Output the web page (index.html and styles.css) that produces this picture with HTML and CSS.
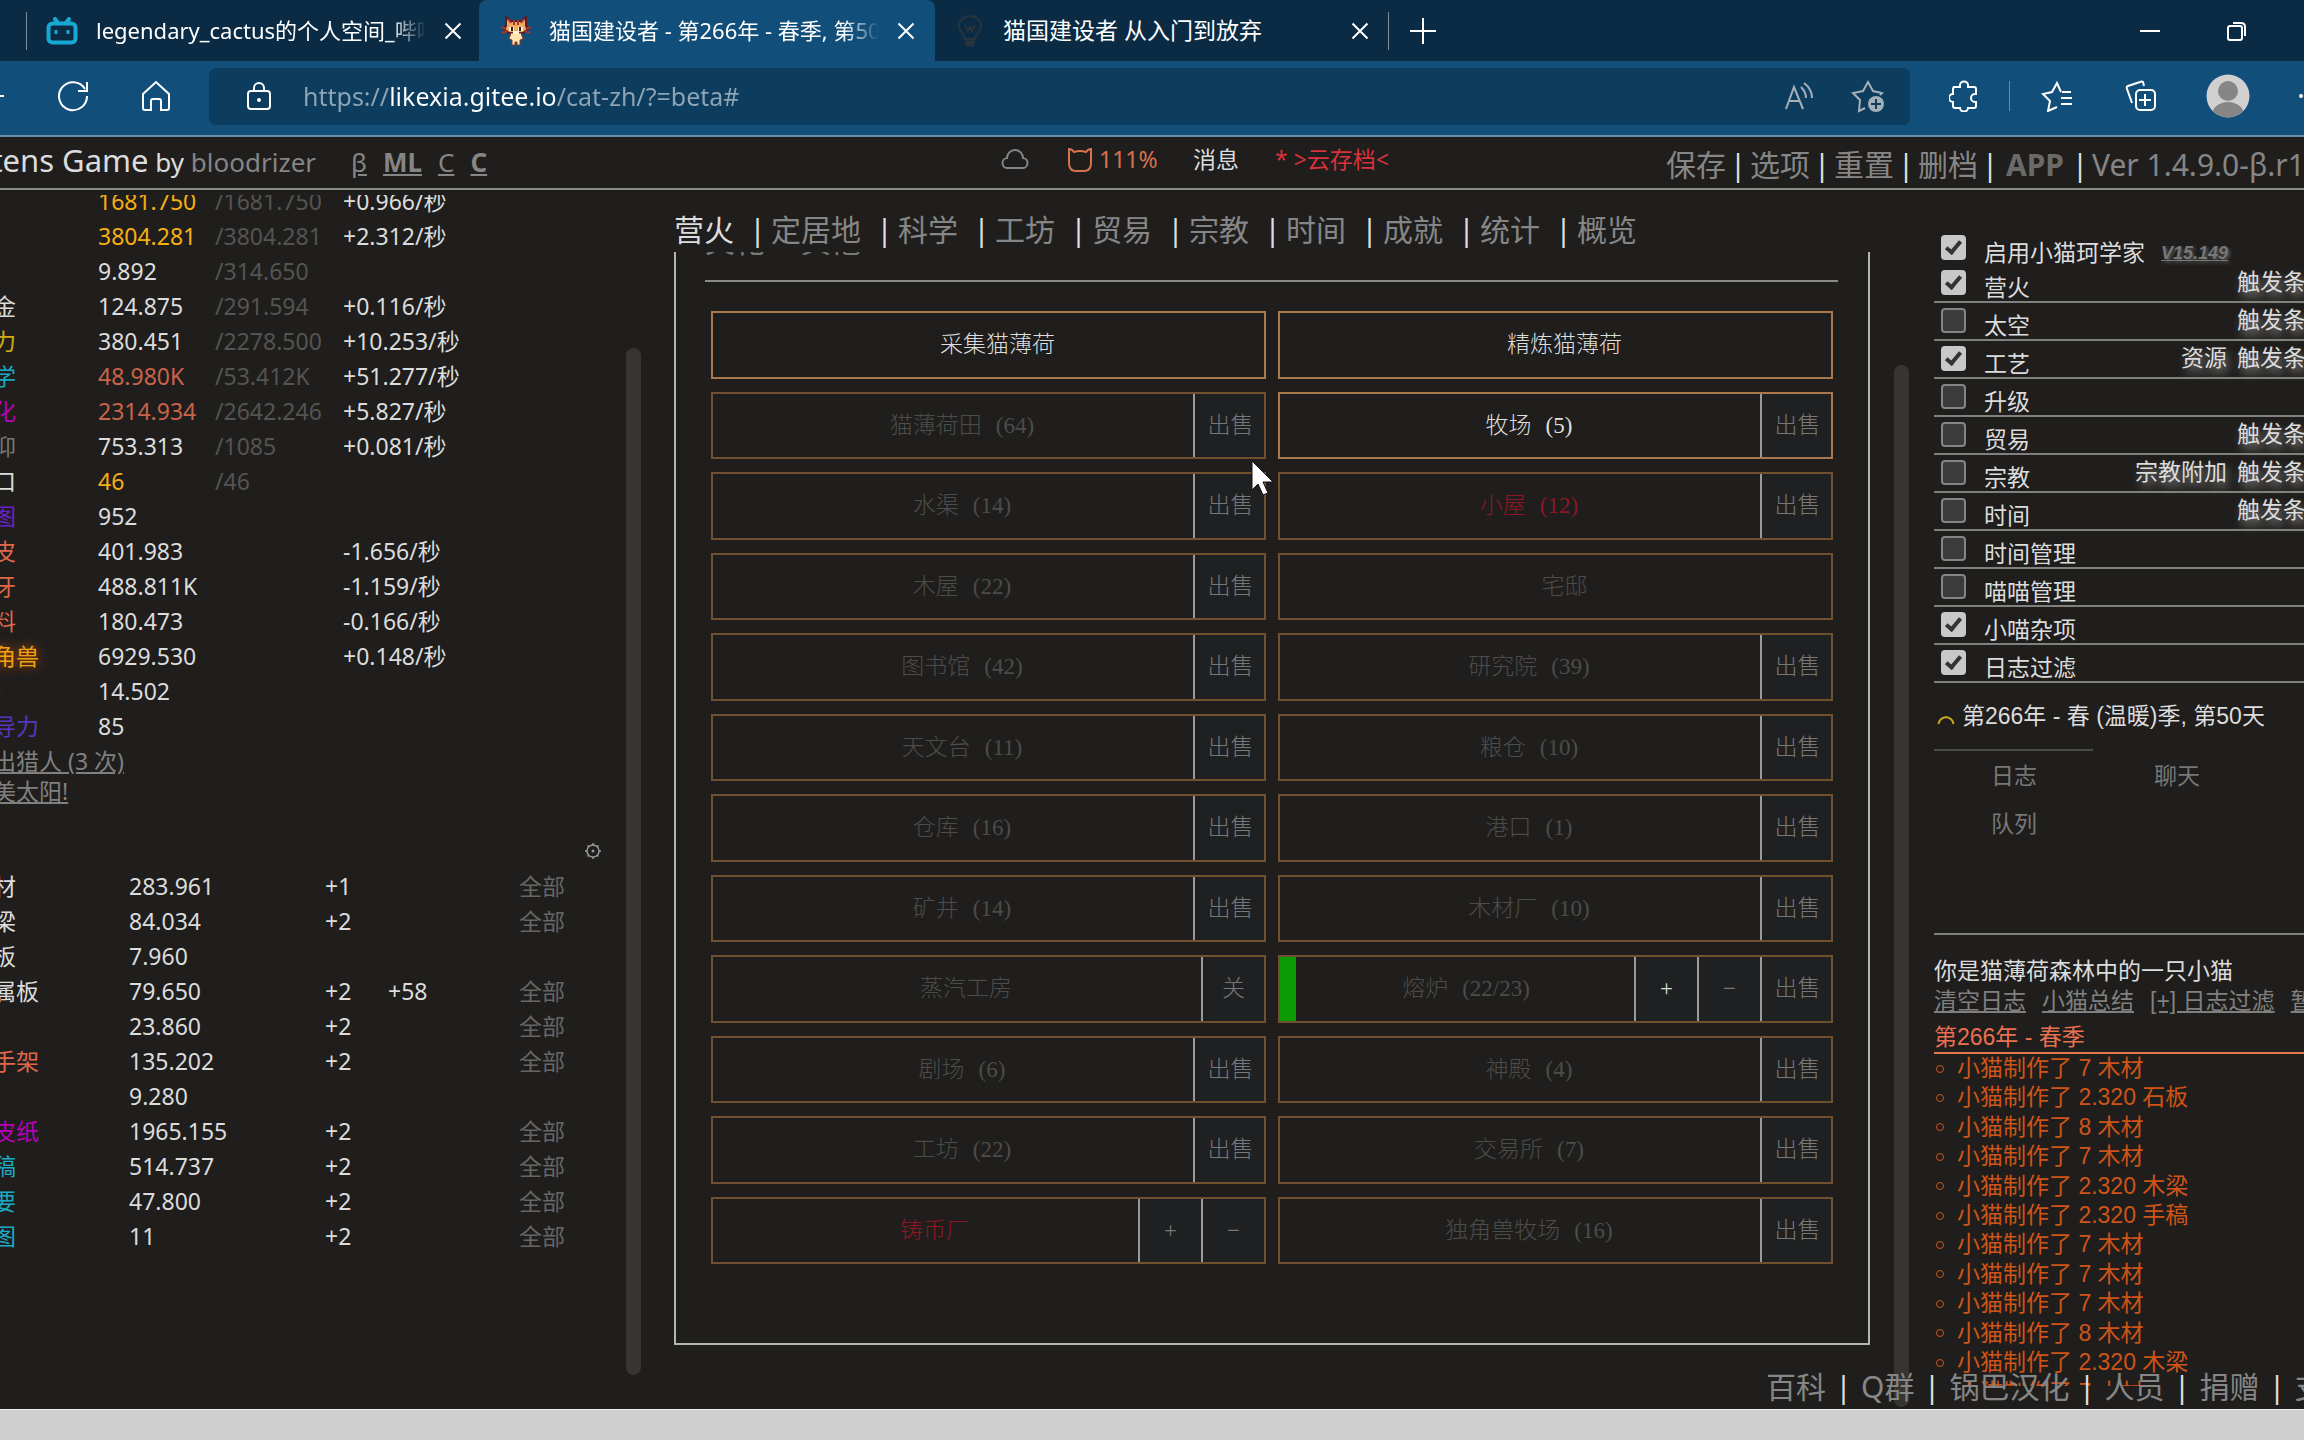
FILE: index.html
```html
<!DOCTYPE html>
<html lang="zh-CN">
<head>
<meta charset="utf-8">
<meta name="viewport" content="width=device-width, initial-scale=1">
<title>猫国建设者</title>
<link rel="stylesheet" href="styles.css">
</head>
<body>
<div class="tabstrip">
  <div class="tab tab-first">
    <svg class="ico" viewBox="0 0 32 28" width="32" height="28"><g fill="none" stroke="#17a9d3" stroke-width="4" stroke-linecap="round"><path d="M9 2l3 4M23 2l-3 4"/><rect x="2.500" y="6.500" width="27" height="19" rx="4"/></g><path d="M10 13v4M22 13v4" stroke="#17a9d3" stroke-width="3"/></svg>
    <span class="tab-title">legendary_cactus的个人空间_哔哩哔哩</span>
    <button class="close" aria-label="关闭"><svg viewBox="0 0 18 18" width="18" height="18"><path d="M1.500 1.500l15 15M16.500 1.500l-15 15"/></svg></button>
  </div>
  <div class="tab tab-active">
    <svg class="ico" viewBox="0 0 30 30" width="30" height="30"><path d="M5 1l5 4h10l5-4v9l2 3-5 4H8l-5-4 2-3z" fill="#ecaa62" stroke="#5c1b26" stroke-width="2"/><path d="M10 17h10l2 6-3 1v5h-3v-3h-2v3h-3v-5l-3-1z" fill="#ffe6b0" stroke="#8a3d2b" stroke-width="1"/><path d="M7 3l3 4M23 3l-3 4M13 4v5M17 4v5M0 11l5 2M30 11l-5 2M1 17l5-2M29 17l-5-2" stroke="#a8382f" stroke-width="2"/><path d="M8 11h5v4H8zM17 11h5v4h-5zM12 15h6v3h-6z" fill="#fff3d6"/><path d="M11 11v4M19 11v4" stroke="#3a1c12" stroke-width="2"/></svg>
    <span class="tab-title">猫国建设者 - 第266年 - 春季, 第50天</span>
    <button class="close" aria-label="关闭"><svg viewBox="0 0 18 18" width="18" height="18"><path d="M1.500 1.500l15 15M16.500 1.500l-15 15"/></svg></button>
  </div>
  <div class="tab tab-last">
    <svg class="ico" viewBox="0 0 26 32" width="26" height="32"><g fill="none" stroke="#28343c" stroke-width="2"><path d="M8 24c0-5-6-6-6-13a11 10 0 0 1 22 0c0 7-6 8-6 13zM8 10l3 6 2-4 2 4 3-6"/><path d="M8 27h10M9 30h8" stroke-width="3"/></g></svg>
    <span class="tab-title">猫国建设者 从入门到放弃</span>
    <button class="close" aria-label="关闭"><svg viewBox="0 0 18 18" width="18" height="18"><path d="M1.500 1.500l15 15M16.500 1.500l-15 15"/></svg></button>
  </div>
  <button class="newtab" aria-label="新建标签页"><svg viewBox="0 0 28 28" width="28" height="28"><path d="M14 1v26M1 14h26"/></svg></button>
  <div class="winctl">
    <button aria-label="最小化"><svg viewBox="0 0 20 20" width="20" height="20"><path d="M0 10h20"/></svg></button>
    <button aria-label="还原"><svg viewBox="0 0 20 20" width="20" height="20"><rect x="1" y="5" width="14" height="14" rx="2"/><path d="M6 2h8q4 0 4 4v9"/></svg></button>
  </div>
</div>
<div class="toolbar">
  <button class="back" aria-label="后退"><svg viewBox="0 0 30 30" width="30" height="30"><path d="M2 15h28M13 4L2 15l11 11"/></svg></button>
  <button class="reload" aria-label="刷新"><svg viewBox="0 0 32 32" width="32" height="32"><path d="M28 9A14 14 0 1 0 30 16M30 2v9h-9"/></svg></button>
  <button class="home" aria-label="主页"><svg viewBox="0 0 30 32" width="30" height="32"><path d="M2 14L15 2l13 12v14q0 2-2 2h-6v-9q0-2-2-2h-6q-2 0-2 2v9H4q-2 0-2-2z"/></svg></button>
  <div class="address">
    <svg viewBox="0 0 26 30" width="26" height="30"><rect x="2" y="10" width="22" height="18" rx="3"/><path d="M8 10V7a5 5 0 0 1 10 0v3"/><circle cx="13" cy="19" r="1"/></svg>
    <input type="text" aria-label="地址" value="https://likexia.gitee.io/cat-zh/?=beta#">
    <button class="dim" aria-label="朗读"><svg viewBox="0 0 30 30" width="30" height="30"><path d="M2 28L10 6l9 22M5 20h11M17 6q5 5 5 11M20 2q8 6 8 15"/></svg></button>
    <button class="dim fav" aria-label="收藏"><svg viewBox="0 0 34 34" width="34" height="34"><path d="M14 29l-6 3 1-11-7-7 10-2 5-9 5 9 9 2-2 2"/><circle cx="25" cy="25" r="8" fill="#a5b0b8" stroke="none"/><path d="M25 20v10M20 25h10" stroke="#0c3d5e"/></svg></button>
  </div>
  <button class="ext" aria-label="扩展"><svg viewBox="0 0 30 32" width="30" height="32"><path d="M4 7h7V5a4 3.500 0 0 1 8 0v2h6q2 0 2 2v5h-1a4 4 0 0 0 0 8h1v4q0 2-2 2h-6a4 3.500 0 0 1-8 0H6q-2 0-2-2v-4a4 4 0 0 1 0-8V9q0-2 2-2"/></svg></button>
  <span class="vline"></span>
  <button class="favs" aria-label="收藏夹"><svg viewBox="0 0 32 32" width="32" height="32"><path d="M20 12l-4-9-5 9-9 2 7 7-2 10 9-4M21 12h9M20 18h11M20 24h11"/></svg></button>
  <button class="coll" aria-label="集锦"><svg viewBox="0 0 32 32" width="32" height="32"><path d="M20 6l-1-4q-1-1-3 0L4 6q-2 1-1 3l5 14"/><rect x="12" y="10" width="19" height="20" rx="4"/><path d="M21 14v12M15 20h12"/></svg></button>
  <svg class="avatar" viewBox="0 0 44 44" width="44" height="44"><clipPath id="av"><circle cx="22" cy="22" r="21.500"/></clipPath><g clip-path="url(#av)" stroke="none"><rect width="44" height="44" fill="#d0d0d0"/><circle cx="22" cy="17" r="10" fill="#868686"/><ellipse cx="22" cy="41" rx="16" ry="13" fill="#868686"/></g></svg>
  <button class="more" aria-label="更多"><svg viewBox="0 0 6 6" width="6" height="6"><circle cx="3" cy="3" r="2"/></svg></button>
</div>
<main class="game">
  <header class="head">
    <div class="brand"><span class="brand-name">Kittens Game</span> by <a href="#">bloodrizer</a></div>
    <nav class="langs"><a href="#">β</a><a href="#"><b>ML</b></a><a href="#">C</a><a href="#"><b>C</b></a></nav>
    <div class="status">
      <svg class="cloud" viewBox="0 0 28 22" width="28" height="22"><path d="M7 19a5 5 0 0 1-1-10 8 8 0 0 1 16 0 5 5 0 0 1-1 10z" fill="none" stroke="#868686" stroke-width="2"/></svg>
      <span class="happy"><svg viewBox="0 0 26 26" width="26" height="26"><path d="M2 2q3 0 5 3 6-2 12 0 2-3 5-3v14q0 8-7 8H9q-7 0-7-8z" fill="none" stroke="#d9714f" stroke-width="2"/></svg>111%</span>
      <span class="msg">消息</span>
      <a class="cloudsave" href="#">* &gt;云存档&lt;</a>
    </div>
    <nav class="menu"><a href="#">保存</a><i>|</i><a href="#">选项</a><i>|</i><a href="#">重置</a><i>|</i><a href="#">删档</a><i>|</i><a href="#" class="app"><b>APP</b></a><i>|</i><span>Ver 1.4.9.0-β.r13</span></nav>
  </header>
  <div class="columns">
    <aside class="left">
      <div class="left-body">
      <table class="res">
        <colgroup><col class="c-name"><col class="c-max"><col class="c-rate"><col></colgroup>
        <tr><td>煤</td><td class="full">1681.750</td><td class="max">/1681.750</td><td>+0.966/秒</td></tr>
        <tr><td>铁</td><td class="full">3804.281</td><td class="max">/3804.281</td><td>+2.312/秒</td></tr>
        <tr><td>钛</td><td>9.892</td><td class="max">/314.650</td><td></td></tr>
        <tr><td>黄金</td><td>124.875</td><td class="max">/291.594</td><td>+0.116/秒</td></tr>
        <tr><td class="n-power">电力</td><td>380.451</td><td class="max">/2278.500</td><td>+10.253/秒</td></tr>
        <tr><td class="n-sci">科学</td><td class="near">48.980K</td><td class="max">/53.412K</td><td>+51.277/秒</td></tr>
        <tr><td class="n-cult">文化</td><td class="near">2314.934</td><td class="max">/2642.246</td><td>+5.827/秒</td></tr>
        <tr><td class="n-faith">信仰</td><td>753.313</td><td class="max">/1085</td><td>+0.081/秒</td></tr>
        <tr><td>人口</td><td class="full">46</td><td class="max">/46</td><td></td></tr>
        <tr><td class="n-blue">蓝图</td><td>952</td><td></td><td></td></tr>
        <tr><td class="n-lux">毛皮</td><td>401.983</td><td></td><td>-1.656/秒</td></tr>
        <tr><td class="n-lux">象牙</td><td>488.811K</td><td></td><td>-1.159/秒</td></tr>
        <tr><td class="n-lux">香料</td><td>180.473</td><td></td><td>-0.166/秒</td></tr>
        <tr><td class="n-uni">独角兽</td><td>6929.530</td><td></td><td>+0.148/秒</td></tr>
        <tr><td class="n-uni">泪</td><td>14.502</td><td></td><td></td></tr>
        <tr><td class="n-lead">领导力</td><td>85</td><td></td><td></td></tr>
      </table>
      <div class="acts"><a href="#">派出猎人 (3 次)</a><a href="#">赞美太阳!</a></div>
      <div class="gear"><button aria-label="设置"><svg viewBox="0 0 18 18" width="18" height="18"><g fill="none" stroke="#999" stroke-width="1.500"><circle cx="9" cy="9" r="6"/><path d="M9 1v2M9 15v2M1 9h2M15 9h2M3.500 3.500l1 1M13.500 13.500l1 1M14.500 3.500l-1 1M4.500 13.500l-1 1"/></g><circle cx="9" cy="9" r="1.500" fill="#999"/></svg></button></div>
      <table class="craft">
        <colgroup><col class="k-name"><col class="k-val"><col class="k-one"><col class="k-two"><col></colgroup>
        <tr><td>木材</td><td>283.961</td><td>+1</td><td></td><td><a href="#">全部</a></td></tr>
        <tr><td>木梁</td><td>84.034</td><td>+2</td><td></td><td><a href="#">全部</a></td></tr>
        <tr><td>石板</td><td>7.960</td><td></td><td></td><td></td></tr>
        <tr><td>金属板</td><td>79.650</td><td>+2</td><td>+58</td><td><a href="#">全部</a></td></tr>
        <tr><td>钢</td><td>23.860</td><td>+2</td><td></td><td><a href="#">全部</a></td></tr>
        <tr><td class="n-lux">脚手架</td><td>135.202</td><td>+2</td><td></td><td><a href="#">全部</a></td></tr>
        <tr><td>船</td><td>9.280</td><td></td><td></td><td></td></tr>
        <tr><td class="n-cult">羊皮纸</td><td>1965.155</td><td>+2</td><td></td><td><a href="#">全部</a></td></tr>
        <tr><td class="n-sci">手稿</td><td>514.737</td><td>+2</td><td></td><td><a href="#">全部</a></td></tr>
        <tr><td class="n-sci">概要</td><td>47.800</td><td>+2</td><td></td><td><a href="#">全部</a></td></tr>
        <tr><td class="n-sci">蓝图</td><td>11</td><td>+2</td><td></td><td><a href="#">全部</a></td></tr>
      </table>
      </div>
      <div class="thumb"></div>
    </aside>
    <section class="mid">
      <nav class="gtabs"><a href="#" class="on">营火</a><i>|</i><a href="#">定居地</a><i>|</i><a href="#">科学</a><i>|</i><a href="#">工坊</a><i>|</i><a href="#">贸易</a><i>|</i><a href="#">宗教</a><i>|</i><a href="#">时间</a><i>|</i><a href="#">成就</a><i>|</i><a href="#">统计</a><i>|</i><a href="#">概览</a></nav>
      <div class="panel">
        <div class="filters"><a href="#">文化</a><a href="#">其他</a></div>
        <div class="blds">
          <div class="bld ok"><button class="nm">采集猫薄荷</button></div>
          <div class="bld ok"><button class="nm">精炼猫薄荷</button></div>
          <div class="bld"><button class="nm">猫薄荷田 <span>(64)</span></button><button class="sd">出售</button></div>
          <div class="bld ok"><button class="nm">牧场 <span>(5)</span></button><button class="sd">出售</button></div>
          <div class="bld"><button class="nm">水渠 <span>(14)</span></button><button class="sd">出售</button></div>
          <div class="bld lim"><button class="nm">小屋 <span>(12)</span></button><button class="sd">出售</button></div>
          <div class="bld"><button class="nm">木屋 <span>(22)</span></button><button class="sd">出售</button></div>
          <div class="bld"><button class="nm">宅邸</button></div>
          <div class="bld"><button class="nm">图书馆 <span>(42)</span></button><button class="sd">出售</button></div>
          <div class="bld"><button class="nm">研究院 <span>(39)</span></button><button class="sd">出售</button></div>
          <div class="bld"><button class="nm">天文台 <span>(11)</span></button><button class="sd">出售</button></div>
          <div class="bld"><button class="nm">粮仓 <span>(10)</span></button><button class="sd">出售</button></div>
          <div class="bld"><button class="nm">仓库 <span>(16)</span></button><button class="sd">出售</button></div>
          <div class="bld"><button class="nm">港口 <span>(1)</span></button><button class="sd">出售</button></div>
          <div class="bld"><button class="nm">矿井 <span>(14)</span></button><button class="sd">出售</button></div>
          <div class="bld"><button class="nm">木材厂 <span>(10)</span></button><button class="sd">出售</button></div>
          <div class="bld"><button class="nm">蒸汽工房</button><button class="sd nr">关</button></div>
          <div class="bld prog"><button class="nm">熔炉 <span>(22/23)</span></button><button class="sd nr lit">+</button><button class="sd nr">−</button><button class="sd">出售</button></div>
          <div class="bld"><button class="nm">剧场 <span>(6)</span></button><button class="sd">出售</button></div>
          <div class="bld"><button class="nm">神殿 <span>(4)</span></button><button class="sd">出售</button></div>
          <div class="bld"><button class="nm">工坊 <span>(22)</span></button><button class="sd">出售</button></div>
          <div class="bld"><button class="nm">交易所 <span>(7)</span></button><button class="sd">出售</button></div>
          <div class="bld lim"><button class="nm">铸币厂</button><button class="sd nr">+</button><button class="sd nr">−</button></div>
          <div class="bld"><button class="nm">独角兽牧场 <span>(16)</span></button><button class="sd">出售</button></div>
        </div>
      </div>
    </section>
    <div class="thumb thumb-mid"></div>
    <aside class="right">
      <div class="opts">
        <div class="opt top"><input type="checkbox" id="o1" checked><label for="o1">启用小猫珂学家</label><a class="ver" href="#">V15.149</a></div>
        <div class="opt"><input type="checkbox" id="o2" checked><label for="o2">营火</label><span class="ex"><a href="#">触发条件</a></span></div>
        <div class="opt"><input type="checkbox" id="o3"><label for="o3">太空</label><span class="ex"><a href="#">触发条件</a></span></div>
        <div class="opt"><input type="checkbox" id="o4" checked><label for="o4">工艺</label><span class="ex"><a href="#">资源</a><a href="#">触发条件</a></span></div>
        <div class="opt"><input type="checkbox" id="o5"><label for="o5">升级</label></div>
        <div class="opt"><input type="checkbox" id="o6"><label for="o6">贸易</label><span class="ex"><a href="#">触发条件</a></span></div>
        <div class="opt"><input type="checkbox" id="o7"><label for="o7">宗教</label><span class="ex"><a href="#">宗教附加</a><a href="#">触发条件</a></span></div>
        <div class="opt"><input type="checkbox" id="o8"><label for="o8">时间</label><span class="ex"><a href="#">触发条件</a></span></div>
        <div class="opt"><input type="checkbox" id="o9"><label for="o9">时间管理</label></div>
        <div class="opt"><input type="checkbox" id="o10"><label for="o10">喵喵管理</label></div>
        <div class="opt"><input type="checkbox" id="o11" checked><label for="o11">小喵杂项</label></div>
        <div class="opt"><input type="checkbox" id="o12" checked><label for="o12">日志过滤</label></div>
      </div>
      <div class="date"><svg viewBox="0 0 18 10" width="18" height="10"><path d="M1.500 9q1-6 7.500-7 6.500 1 7.500 7" fill="none" stroke="#c9a51c" stroke-width="2"/></svg>第266年 - 春 (温暖)季, 第50天</div>
      <nav class="rtabs"><a href="#">日志</a><a href="#">聊天</a><a href="#">队列</a></nav>
      <div class="intro">你是猫薄荷森林中的一只小猫</div>
      <div class="loglinks"><a href="#">清空日志</a><a href="#">小猫总结</a><a href="#">[+] 日志过滤</a><a href="#">暂停</a></div>
      <h2 class="season">第266年 - 春季</h2>
      <div class="logclip"><ul class="log">
        <li>小猫制作了 7 木材</li>
        <li>小猫制作了 2.320 石板</li>
        <li>小猫制作了 8 木材</li>
        <li>小猫制作了 7 木材</li>
        <li>小猫制作了 2.320 木梁</li>
        <li>小猫制作了 2.320 手稿</li>
        <li>小猫制作了 7 木材</li>
        <li>小猫制作了 7 木材</li>
        <li>小猫制作了 7 木材</li>
        <li>小猫制作了 8 木材</li>
        <li>小猫制作了 2.320 木梁</li>
        <li>小猫制作了 7 木材</li>
      </ul></div>
    </aside>
  </div>
  <footer class="foot"><a href="#">百科</a><i>|</i><a href="#">Q群</a><i>|</i><a href="#">锅巴汉化</a><i>|</i><a href="#">人员</a><i>|</i><a href="#">捐赠</a><i>|</i><a href="#">支持</a></footer>
  <svg class="cursor" viewBox="0 0 24 36" width="24" height="36"><path d="M1 1v29l6-6 5 11 5-2-5-11h10z" fill="#fff" stroke="#111"/></svg>
</main>
<div class="shelf"></div>
</body>
</html>
```
FILE: styles.css
```css
* { box-sizing: border-box; }
body {
  margin: 0;
  height: 100vh;
  display: flex;
  flex-direction: column;
  overflow: hidden;
  background: #1f1e1c;
  color: #dcdcdc;
  font: 23px/35px "Noto Sans", "Noto Sans CJK SC", sans-serif;
  white-space: nowrap;
}
a { color: inherit; text-decoration: none; }
i { font-style: normal; }
button {
  font: inherit;
  color: inherit;
  background: none;
  border: 0;
  padding: 0;
  display: flex;
  align-items: center;
  justify-content: center;
}
svg { display: block; flex: none; }

/* browser tabs */
.tabstrip {
  display: flex;
  align-items: center;
  height: 61px;
  flex: none;
  background: #0a2b43;
  color: #fff;
}
.tabstrip button svg, .toolbar button svg, .address > svg {
  fill: none;
  stroke: #fff;
  stroke-width: 2;
}
.tab {
  display: flex;
  align-items: center;
  height: 61px;
  font-size: 22px;
}
.tab-title { flex: 1; overflow: hidden; }
.tab-first {
  width: 453px;
  margin-left: 26px;
  padding: 0 17px 0 20px;
  gap: 18px;
  background: linear-gradient(#7d8d98, #7d8d98) 0 12px / 1px 38px no-repeat;
}
.tab-active {
  width: 456px;
  padding: 0 20px 0 22px;
  gap: 18px;
  background: #114f7a;
  border-radius: 8px 8px 0 0;
}
.tab-first .tab-title, .tab-active .tab-title {
  -webkit-mask-image: linear-gradient(90deg, #000 calc(100% - 36px), transparent);
  mask-image: linear-gradient(90deg, #000 calc(100% - 36px), transparent);
}
.tab-last {
  width: 454px;
  padding: 0 20px 0 22px;
  gap: 20px;
  font-size: 23px;
  background: linear-gradient(#7d8d98, #7d8d98) 100% 12px / 1px 38px no-repeat;
}
.newtab { margin-left: 20px; }
.winctl { margin-left: auto; display: flex; gap: 67px; padding-right: 57px; }

/* browser toolbar */
.toolbar {
  display: flex;
  align-items: center;
  height: 76px;
  flex: none;
  padding-bottom: 4px;
  background: #114f7a;
  border-bottom: 2px solid #6d8ca5;
}
.back { margin-left: -26px; }
.reload { margin-left: 53px; }
.home { margin-left: 52px; }
.address {
  flex: 1;
  display: flex;
  align-items: center;
  height: 57px;
  margin-left: 38px;
  padding: 0 25px 0 37px;
  background: #0c3d5e;
  border-radius: 7px;
}
.address input {
  flex: 1;
  min-width: 0;
  margin-left: 31px;
  padding: 0;
  border: 0;
  font: 25px/40px "Noto Sans", sans-serif;
  color: transparent;
  background: linear-gradient(90deg, #8fa5b5 86px, #fff 86px, #fff 254px, #8fa5b5 254px);
  -webkit-background-clip: text;
  background-clip: text;
}
.toolbar .dim svg { stroke: #a5b0b8; }
.fav { margin-left: 37px; }
.ext { margin-left: 39px; }
.vline { width: 1px; height: 30px; margin-left: 30px; background: #5f8bab; }
.favs { margin-left: 31px; }
.coll { margin-left: 51px; }
.avatar { margin-left: 50px; }
.toolbar .more { margin-left: 48px; }
.toolbar .more svg { fill: #fff; stroke: none; }

/* game header */
.game { position: relative; flex: 1; min-height: 0; display: flex; flex-direction: column; overflow: hidden; }
.head {
  display: flex;
  align-items: center;
  height: 53px;
  flex: none;
  border-bottom: 2px solid #8a8a88;
  font-size: 26px;
}
.brand { margin-left: -47px; width: 398px; padding-bottom: 2px; }
.brand-name { font-size: 31px; }
.brand a, .langs { color: #858585; }
.langs { display: flex; gap: 16px; width: 650px; }
.langs a { text-decoration: underline; }
.status { display: flex; align-items: center; font-size: 23px; padding-bottom: 6px; }
.happy { display: flex; align-items: center; gap: 6px; margin-left: 38px; width: 126px; color: #d9714f; }
.msg { width: 82px; }
.cloudsave { color: #d8323c; }
.menu { display: flex; margin-left: auto; width: 638px; padding-top: 3px; font-size: 30px; color: #868686; }
.menu i { width: 24px; text-align: center; flex: none; color: #ddd; }
.menu .app { flex: none; width: 66px; text-align: center; color: #6a6a68; }

/* columns */
.columns { display: flex; flex: 1; min-height: 0; }
.thumb {
  width: 15px;
  flex: none;
  margin: 158px 0 34px;
  border-radius: 8px;
  background: #363531;
}
.left { display: flex; width: 641px; flex: none; }
.left-body { flex: 1; margin-top: 5px; overflow: hidden; }
table { border-collapse: collapse; table-layout: fixed; margin-left: -30px; width: 620px; }
td { padding: 0; height: 35px; }
.res { margin-top: -11px; }
.c-name { width: 128px; }
.c-max { width: 117px; }
.c-rate { width: 128px; }
.k-name { width: 159px; }
.k-val { width: 196px; }
.k-one { width: 63px; }
.k-two { width: 131px; }
.max { color: #545452; }
.full { color: #f5ae14; }
.near { color: #c9634a; }
.n-power { color: #d2ac14; }
.n-sci { color: #1ca9c4; }
.n-cult { color: #b800b8; }
.n-faith { color: #777; }
.n-blue { color: #6a20c8; }
.n-lux { color: #e0684a; }
.n-uni { color: #f0a010; text-shadow: 0 0 12px #c05010; }
.n-lead { color: #5a35c0; }
.craft a { color: #666; }
.acts {
  display: flex;
  flex-direction: column;
  align-items: flex-start;
  margin: 2px 0 0 -30px;
  line-height: 30px;
  color: #808080;
}
.acts a { text-decoration: underline; }
.gear { display: flex; height: 63px; padding: 36px 0 9px 584px; }

/* buildings */
.mid { flex: 1; min-width: 0; margin: 18px 24px 64px 33px; display: flex; flex-direction: column; }
.gtabs { display: flex; height: 44px; flex: none; font-size: 30px; line-height: 44px; color: #868686; }
.gtabs i { width: 37px; padding-left: 10px; text-align: center; color: #ddd; }
.gtabs .on { color: #ddd; }
.panel { flex: 1; border: 2px solid #b4b4b2; border-top: 0; padding: 0 30px 0 29px; overflow: hidden; }
.filters {
  display: flex;
  gap: 36px;
  height: 30px;
  border-bottom: 2px solid #8a8a88;
  font-size: 30px;
  line-height: 40px;
  color: #777;
}
.filters a { margin-top: -31px; }
.blds {
  display: grid;
  grid-template-columns: 1fr 1fr;
  grid-auto-rows: 1fr;
  gap: 13px 12px;
  height: 953px;
  margin: 29px 5px 0 6px;
  font-family: "Liberation Serif", "Noto Sans CJK SC", serif;
  font-weight: 300;
}
.bld { display: flex; border: 2px solid #71502f; color: #4c4c4a; }
.bld.ok { border-color: #ab784d; color: #dedede; }
.bld.lim .nm { color: #8e1626; }
.nm { flex: 1; padding-left: 18px; }
.nm span { margin-left: 14px; }
.sd { width: 71px; padding-left: 2px; border-left: 2px solid #9a9a98; background: #1f2021; color: #777; }
.sd.nr { width: 63px; padding-left: 0; }
.sd.lit { color: #ddd; }
.prog { background: linear-gradient(#0a9a04, #0a9a04) 0 0 / 16px 100% no-repeat; }
.thumb-mid { margin: 175px 0 2px; }

/* options and log */
.right { flex: 0 0 395px; padding: 40px 0 0 25px; overflow: hidden; font-family: "Liberation Sans", "Noto Sans CJK SC", sans-serif; }
.opt { display: flex; height: 38px; padding-left: 7px; border-bottom: 2px solid #80807e; line-height: 46px; }
.opt.top { height: 35px; border-bottom: 0; }
.opt label { margin-left: 18px; }
.opt input {
  appearance: none;
  flex: none;
  width: 25px;
  height: 25px;
  margin: 5px 0 0;
  border: 2px solid #858585;
  border-radius: 4px;
  background: #3b3b3b;
}
.opt input:checked {
  border-color: #c8c8c8;
  background: #c8c8c8;
}
.opt input:checked::before {
  content: "";
  display: block;
  width: 5px;
  height: 12px;
  margin: 1px 0 0 6px;
  border: solid #333;
  border-width: 0 4px 4px 0;
  transform: rotate(40deg);
}
.ex { display: flex; gap: 10px; margin-left: auto; margin-right: -25px; line-height: 34px; text-shadow: 3px 6px 8px #888; }
.ver { margin-left: 16px; font-size: 18px; font-style: italic; font-weight: 700; color: #777; text-decoration: underline; text-shadow: 2px 2px 3px #555; }
.date { display: flex; align-items: center; gap: 7px; height: 66px; padding-left: 3px; }
.date svg { margin-top: 7px; }
.rtabs {
  display: grid;
  grid-template-columns: 160px 166px;
  grid-auto-rows: 48px;
  height: 186px;
  border-bottom: 2px solid #80807e;
  background: linear-gradient(#4a4a48, #4a4a48) 0 0 / 159px 2px no-repeat;
  text-align: center;
  line-height: 54px;
  color: #777;
}
.intro { margin-top: 21px; line-height: 30px; }
.loglinks { display: flex; gap: 16px; line-height: 30px; color: #808080; }
.loglinks a { text-decoration: underline; }
.season { margin: 6px 0 0; border-bottom: 2px solid #e8764f; font: inherit; line-height: 30px; color: #e8704f; }
.logclip { height: 332px; overflow: hidden; }
.log {
  display: grid;
  grid-auto-rows: 1fr;
  height: 353px;
  margin: 0;
  padding: 0 0 0 2px;
  list-style: none;
  line-height: 29px;
  color: #cf5417;
}
.log li { display: flex; align-items: center; gap: 13px; height: 29px; }
.log li::before { content: ""; box-sizing: border-box; width: 8px; height: 8px; border: 1px solid; border-radius: 50%; }
.foot {
  position: absolute;
  right: 0;
  bottom: 0;
  display: flex;
  width: 538px;
  height: 42px;
  font-size: 30px;
  line-height: 40px;
  color: #868686;
}
.foot i { width: 35px; flex: none; text-align: center; color: #ddd; }
.cursor { position: absolute; left: 1251px; top: 323px; }
.shelf { height: 31px; flex: none; background: #cfcfcf; border-top: 1px solid #eee; }
```
